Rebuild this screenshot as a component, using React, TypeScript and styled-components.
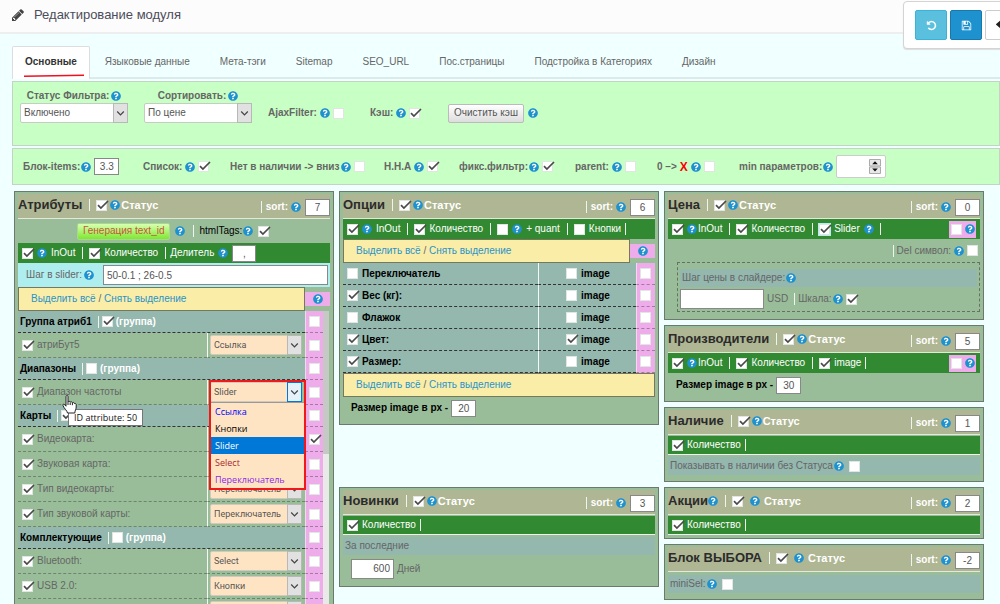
import React from 'react';
import styled, { createGlobalStyle, css } from 'styled-components';
import { FaQuestionCircle, FaReply } from 'react-icons/fa';

const Global = createGlobalStyle`
  *, *::before, *::after { box-sizing: border-box; }
  html { background: #f0ffff; }
  body { margin: 0; overflow-x: hidden; font: 10px/14px "Liberation Sans", Arial, sans-serif; color: #666; }
  input, select, button { font: inherit; color: inherit; margin: 0; }
`;

const Page = styled.div`
  position: relative;
  overflow-x: clip;
`;

const TopBar = styled.header`
  display: flex;
  align-items: center;
  gap: 10px;
  height: 34px;
  padding: 0 12px 2px;
  background: #fcfcfc;
  border-bottom: 2px solid #eee;
  color: #4c4d5a;
`;

const Title = styled.h1`
  margin: 0;
  font-size: 13px;
  font-weight: 400;
  line-height: 20px;
`;

const Toolbox = styled.div`
  position: absolute;
  top: 1px;
  right: -29px;
  z-index: 2;
  display: flex;
  gap: 3px;
  padding: 8px 11px;
  background: #fff;
  border: 1px solid #d4d4d4;
  border-radius: 4px;
  box-shadow: 0 1px 1px #ddd;
`;

const ToolButton = styled.button<{ $bg: string; $edge: string; $fg?: string }>`
  display: flex;
  align-items: center;
  justify-content: center;
  width: 32px;
  height: 30px;
  padding: 0;
  border: 1px solid ${p => p.$edge};
  border-radius: 2px;
  background: ${p => p.$bg};
  color: ${p => p.$fg ?? '#fff'};
`;

const Main = styled.main`
  padding: 12px 0 0 12px;
`;

const Tabs = styled.nav`
  display: flex;
  height: 33px;
  border-bottom: 2px solid #ddeaea;
`;

const Tab = styled.a<{ $active?: boolean }>`
  position: relative;
  height: 33px;
  padding: 9px 15px 0;
  color: #666;
  text-decoration: none;
  ${p => p.$active && css`
    padding: 8px 12px 0;
    border: 1px solid #ddd;
    border-bottom: 0;
    border-radius: 2px 2px 0 0;
    background: #fff;
    color: #333;
    font-weight: 700;
  `}
`;

const Underline = styled.svg`
  position: absolute;
  left: 11px;
  bottom: 2px;
`;

const Settings = styled.section<{ $cols: string; $tall?: boolean }>`
  display: grid;
  grid-template-columns: ${p => p.$cols};
  align-items: ${p => (p.$tall ? 'start' : 'center')};
  height: ${p => (p.$tall ? 65 : 37)}px;
  margin-top: 2px;
  padding: ${p => (p.$tall ? '7px 8px 0 7px' : '0 10px')};
  background: #c8ffc4;
  border: 1px solid #c4d4c4;
`;

const Setting = styled.div<{ $drop?: boolean }>`
  display: flex;
  align-items: center;
  gap: 3px;
  height: 20px;
  margin-top: ${p => (p.$drop ? 14 : 0)}px;
  font-weight: 700;
  white-space: nowrap;
`;

const Stacked = styled.div`
  width: 108px;
  text-align: center;
`;

const StackedLabel = styled.div`
  display: flex;
  justify-content: center;
  align-items: center;
  gap: 2px;
  height: 14px;
  font-weight: 700;
`;

const RedX = styled.b`
  color: #f00;
  font-size: 12px;
`;

const CheckBox = styled.span<{ $tint?: boolean }>`
  position: relative;
  display: inline-flex;
  flex: none;
  width: 11px;
  height: 11px;
  ${p => p.$tint && css`box-shadow: 0 0 0 1px #b8ecec; background: #b8ecec;`}
  input {
    appearance: none;
    width: 11px;
    height: 11px;
    border: 1px solid #e2e6e2;
    background: #fff;
  }
  svg {
    position: absolute;
    left: 1px;
    top: -1px;
    display: none;
    pointer-events: none;
  }
  input:checked + svg { display: block; }
`;

const HelpMark = styled.span`
  display: inline-flex;
  flex: none;
  border-radius: 50%;
  color: #1e91cf;
  background: radial-gradient(circle, #fff 50%, transparent 54%);
`;

const Pair = styled.span<{ $gap?: number }>`
  display: inline-flex;
  align-items: center;
  gap: ${p => p.$gap ?? 1}px;
`;

const Field = styled.input<{ $w: number; $h?: number; $align?: string }>`
  flex: none;
  width: ${p => p.$w}px;
  height: ${p => p.$h ?? 17}px;
  padding: 0 3px;
  border: 1px solid #888;
  background: #fff;
  color: #555;
  font-size: 10px;
  font-weight: 400;
  text-align: ${p => p.$align ?? 'center'};
`;

const Spinner = styled.span`
  position: relative;
  display: inline-flex;
  input {
    width: 50px;
    height: 23px;
    border: 1px solid #ccc;
    border-radius: 2px;
    background: #fff;
    appearance: textfield;
  }
  svg { position: absolute; right: 5px; top: 4px; }
`;

const SelectWrap = styled.span<{ $small?: boolean; $open?: boolean }>`
  position: relative;
  display: block;
  flex: none;
  width: ${p => (p.$small ? 92 : 108)}px;
  height: 20px;
  select {
    appearance: none;
    width: 100%;
    height: 100%;
    padding: 0 3px;
    border: 1px solid ${p => (p.$small ? '#cfc9c0' : '#c4ccc4')};
    border-radius: 2px;
    background: ${p => (p.$small ? '#ffe4c4' : '#fff')};
    color: #555;
    ${p => p.$small && css`font: 9px/14px Roboto, sans-serif;`}
  }
  svg {
    position: absolute;
    top: 0;
    right: 0;
    width: 15px;
    height: 20px;
    border: 1px solid ${p => (p.$open ? '#0078d7' : '#b8b8b8')};
    background: ${p => (p.$open ? '#e5f1fb' : '#e1e1e1')};
    pointer-events: none;
  }
`;

const CacheButton = styled.button`
  height: 19px;
  padding: 0 5px;
  margin-right: 1px;
  border: 1px solid #bbb;
  border-radius: 2px;
  background: linear-gradient(#fff, #ddd);
  color: #555;
  font-weight: 400;
`;

const Columns = styled.div`
  display: grid;
  grid-template-columns: repeat(3, minmax(0, 1fr));
  gap: 5px;
  align-items: start;
  margin-top: 6px;
  padding: 0 16px 0 2px;
`;

const Column = styled.div`
  display: flex;
  flex-direction: column;
  gap: 5px;
`;

const Panel = styled.section<{ $bottom?: number; $push?: number }>`
  padding: 2px 3px ${p => p.$bottom ?? 3}px;
  margin-top: ${p => p.$push ?? 0}px;
  border: 1px solid #6c7a6c;
  background: #99bd99;
`;

const Head = styled.div`
  display: flex;
  align-items: center;
  height: 25px;
  padding-bottom: 2px;
  background: #afb693;
  border-bottom: 1px solid #e4e8d8;
  color: #fff;
  font-weight: 700;
`;

const HeadTitle = styled.h2`
  margin: 0;
  color: #2b2b2b;
  font-size: 13px;
  line-height: 18px;
`;

const Status = styled.label<{ $gap: number }>`
  display: flex;
  align-items: center;
  gap: ${p => p.$gap}px;
  font-size: 11px;
`;

const SortGroup = styled.label`
  display: flex;
  align-items: center;
  gap: 4px;
  margin-left: auto;
  padding-top: 4px;
`;

const Sep = styled.i<{ $m?: string }>`
  flex: none;
  width: 1px;
  height: 12px;
  margin: ${p => p.$m ?? '0 2px 0 3px'};
  background: #eef4ee;
`;

const Bar = styled.div<{ $line?: boolean }>`
  display: flex;
  align-items: center;
  gap: 4px;
  height: 20px;
  padding: 0 4px;
  background: #318a31;
  color: #fff;
  white-space: nowrap;
  ${p => p.$line && css`height: 19px; margin-top: 1px; border-bottom: 1px solid #f0f0f0;`}
`;

const PinkTag = styled.span`
  display: flex;
  align-items: center;
  gap: 3px;
  height: 17px;
  margin: 0 0 0 auto;
  padding: 0 1px 0 2px;
  background: #efacea;
`;

const Generate = styled.div`
  display: flex;
  align-items: center;
  gap: 5px;
  height: 24px;
  padding-left: 59px;
  color: #000;
`;

const GenButton = styled.button`
  height: 17px;
  padding: 0 5px;
  border: 1px solid #a8d890;
  border-radius: 2px;
  background: linear-gradient(#d8ffb0, #7ee830);
  color: #c8553c;
`;

const StepRow = styled.div`
  display: flex;
  align-items: center;
  gap: 2px;
  height: 24px;
  padding: 0 2px 0 8px;
  background: #afeeee;
  input { flex: 1; text-align: left; min-width: 0; margin-left: 7px; }
`;

const PickRow = styled.div`
  display: flex;
  align-items: center;
`;

const Picker = styled.div`
  flex: 1;
  height: 24px;
  padding: 4px 12px;
  border: 1px solid #77775c;
  background: #f9eda8;
  a { color: #2a93c8; text-decoration: none; }
`;

const PinkHelp = styled.span`
  display: flex;
  align-items: center;
  justify-content: center;
  width: 25px;
  height: 14px;
  background: #efacea;
`;

const ListArea = styled.div`
  display: flex;
`;

const Track = styled.div`
  width: 6px;
  margin-right: 1px;
  background: #e9e9e9;
  &::before { content: ''; display: block; height: 143px; background: #c6c8c6; }
`;

const Grid = styled.table`
  flex: 1;
  width: 100%;
  border-collapse: separate;
  border-spacing: 0;
  table-layout: fixed;
  td, th { padding: 0; text-align: left; }
`;

const AttrCell = styled.td`
  height: 25px;
  border-bottom: 1px dashed #6d856d;
`;

const GroupCell = styled.th`
  height: 22px;
  background: #94b7ae;
  border-bottom: 1px dashed #333;
  color: #000;
`;

const SelectCell = styled(AttrCell)`
  position: relative;
  border-left: 1px solid #f4f8f4;
`;

const SelectPad = styled.div`
  padding-left: 2px;
`;

const PinkCell = styled.td`
  background: #efacea;
  border-left: 1px solid #f4d8f0;
  border-bottom: 1px dashed #a07aa0;
`;

const CellRow = styled.label<{ $pad?: number; $gap?: number }>`
  display: flex;
  align-items: center;
  gap: ${p => p.$gap ?? 4}px;
  padding-left: ${p => p.$pad ?? 4}px;
`;

const GroupNote = styled.span`
  color: #fff;
`;

const Menu = styled.div`
  position: absolute;
  z-index: 3;
  top: 0;
  left: 1px;
  width: 97px;
  height: 110px;
  padding-top: 20px;
  border: 2px solid #f01818;
  pointer-events: none;
`;

const MenuList = styled.ul`
  margin: 0;
  padding: 0;
  border-top: 1px solid #999;
  background: #ffe4c4;
  list-style: none;
  font: 9px/17px "Open Sans", sans-serif;
`;

const MenuItem = styled.li<{ $color: string; $on?: boolean }>`
  height: 17px;
  padding-left: 4px;
  color: ${p => p.$color};
  background: ${p => (p.$on ? '#0078d7' : 'transparent')};
`;

const HoverCell = styled(AttrCell)`
  position: relative;
`;

const Hint = styled.div`
  position: absolute;
  z-index: 3;
  left: 50px;
  top: 29px;
  padding: 0 5px;
  border: 1px solid #767676;
  background: #fff;
  color: #111;
  font: 9px/15px "Open Sans", sans-serif;
  white-space: nowrap;
`;

const Hand = styled.svg`
  position: absolute;
  z-index: 4;
  left: 44px;
  top: 15px;
`;

const OptCell = styled.td<{ $line?: boolean }>`
  height: 22px;
  background: #94b7ae;
  border-bottom: 1px dashed #333;
  color: #000;
  font-weight: 700;
  ${p => p.$line && css`border-left: 1px solid #f4f8f4;`}
`;

const SizeRow = styled.label<{ $h?: number }>`
  display: flex;
  align-items: center;
  gap: 3px;
  height: ${p => p.$h ?? 24}px;
  padding-left: 8px;
  color: #000;
  font-weight: 700;
`;

const TealRow = styled.label<{ $top?: number; $gap?: number }>`
  display: flex;
  align-items: center;
  gap: ${p => p.$gap ?? 1}px;
  height: 18px;
  margin-top: ${p => p.$top ?? 2}px;
  padding-left: 2px;
  background: #94b7ae;
`;

const InlineRow = styled.label<{ $pad?: number; $h?: number; $end?: boolean }>`
  display: flex;
  align-items: center;
  justify-content: ${p => (p.$end ? 'flex-end' : 'flex-start')};
  gap: 3px;
  height: ${p => p.$h ?? 24}px;
  padding: 0 ${p => (p.$end ? 2 : 0)}px 0 ${p => p.$pad ?? 0}px;
`;

const DashedBox = styled.div`
  margin-left: 9px;
  height: 50px;
  padding: 3px 2px 0;
  border: 1px dashed #667066;
`;

const Help = () => (
  <HelpMark><FaQuestionCircle size={10} /></HelpMark>
);

const Check = ({ on, name, tint }: { on?: boolean; name: string; tint?: boolean }) => (
  <CheckBox $tint={tint}>
    <input type="checkbox" defaultChecked={on} aria-label={name} />
    <svg width="12" height="12" viewBox="0 0 12 12" fill="none" stroke="#4a4a4a" strokeWidth="1.7">
      <path d="M1 6.200 3.900 9 11 2" />
    </svg>
  </CheckBox>
);

const Select = ({ value, label, small, open }: { value: string; label: string; small?: boolean; open?: boolean }) => (
  <SelectWrap $small={small} $open={open}>
    <select aria-label={label} defaultValue={value}><option>{value}</option></select>
    <svg viewBox="0 0 13 18" fill="none" stroke="#444" strokeWidth="1.2"><path d="M3.2 7.5 6.5 11 9.8 7.5" /></svg>
  </SelectWrap>
);

const PanelHead = ({ title, sort, help, spaced }: { title: string; sort: string; help?: boolean; spaced?: boolean }) => (
  <Head>
    <HeadTitle>{title}</HeadTitle>
    {help && <Help />}
    <Sep $m="0 6px 0 7px" />
    <Status $gap={spaced ? 7 : 3}>
      <Check on name={`${title}: статус`} />
      <Pair $gap={spaced ? 4 : 1}><Help />Статус</Pair>
    </Status>
    <SortGroup>
      <Sep $m="0" />
      <Pair $gap={3}>sort:<Help /></Pair>
      <Field $w={25} defaultValue={sort} />
    </SortGroup>
  </Head>
);

const PickLinks = ({ help }: { help?: boolean }) => (
  <PickRow>
    <Picker><a href="#all">Выделить всё</a> / <a href="#none">Снять выделение</a></Picker>
    {help && <PinkHelp><Help /></PinkHelp>}
  </PickRow>
);

type Row = { name: string; group?: boolean; on?: boolean; kind?: string; flag?: boolean; open?: boolean };

const attributes: Row[] = [
  { name: 'Группа атриб1', group: true, on: true },
  { name: 'атриБут5', kind: 'Ссылка' },
  { name: 'Диапазоны', group: true },
  { name: 'Диапазон частоты', kind: 'Slider', open: true },
  { name: 'Карты', group: true, on: true },
  { name: 'Видеокарта:', kind: 'Slider', flag: true },
  { name: 'Звуковая карта:', kind: 'Select' },
  { name: 'Тип видеокарты:', kind: 'Переключатель' },
  { name: 'Тип звуковой карты:', kind: 'Переключатель' },
  { name: 'Комплектующие', group: true },
  { name: 'Bluetooth:', kind: 'Select' },
  { name: 'USB 2.0:', kind: 'Кнопки' },
  { name: '', kind: '' },
];

const menu = [
  { text: 'Ссылка', color: '#0000ff' },
  { text: 'Кнопки', color: '#000' },
  { text: 'Slider', color: '#fff', on: true },
  { text: 'Select', color: '#a52a2a' },
  { text: 'Переключатель', color: '#8a2be2' },
];

const options = [
  { name: 'Переключатель', on: false, image: false },
  { name: 'Вес (кг):', on: true, image: false },
  { name: 'Флажок', on: false, image: false },
  { name: 'Цвет:', on: true, image: true },
  { name: 'Размер:', on: true, image: false },
];

const AttributeRow = ({ row }: { row: Row }) => {
  if (row.group) {
    return (
      <tr>
        <GroupCell colSpan={2}>
          <CellRow $pad={2} $gap={3}>
            {row.name}
            <Sep $m="0 0 0 3px" />
            <Check on={row.on} name={row.name} />
            <GroupNote>(группа)</GroupNote>
          </CellRow>
        </GroupCell>
        <PinkCell><CellRow $pad={3}><Check name={`${row.name}: метка`} /></CellRow></PinkCell>
      </tr>
    );
  }
  const NameCell = row.open ? HoverCell : AttrCell;
  return (
    <tr>
      <NameCell>
        <CellRow><Check on name={row.name} />{row.name}</CellRow>
        {row.open && (
          <>
            <Hint role="tooltip">ID attribute: 50</Hint>
            <Hand width="15" height="19" viewBox="0 0 15 19" fill="#fff" stroke="#222" strokeWidth="1" strokeLinejoin="round">
              <path d="M4 1.5c0-1.300 2-1.300 2 0V7c.3-1 2-1 2.200.2.500-.8 2-.6 2.200.6.600-.8 1.900-.4 2 .8.800-.5 1.800 0 1.800 1V12c0 2.300-1.200 3-1.400 6H5.500C5.200 15.500 2 13.500 1 10.500c-.5-1.300.8-1.800 1.600-.8L4 11.200z" />
              <path d="M6 7v3M8.200 7.500V10M10.400 8v2.200" />
            </Hand>
          </>
        )}
      </NameCell>
      <SelectCell>
        <SelectPad><Select small label={row.name} value={row.kind ?? ''} open={row.open} /></SelectPad>
        {row.open && (
          <Menu>
            <MenuList>
              {menu.map(m => <MenuItem key={m.text} $color={m.color} $on={m.on}>{m.text}</MenuItem>)}
            </MenuList>
          </Menu>
        )}
      </SelectCell>
      <PinkCell><CellRow $pad={3}><Check on={row.flag} name={`${row.name}: метка`} /></CellRow></PinkCell>
    </tr>
  );
};

const tabs = ['Языковые данные', 'Мета-тэги', 'Sitemap', 'SEO_URL', 'Пос.страницы', 'Подстройка в Категориях', 'Дизайн'];

export default function App() {
  return (
    <>
      <Global />
      <Page>
        <TopBar>
          <svg width="12" height="12" viewBox="128 128 1536 1536" fill="#444">
            <path d="M491 1536l91-91-235-235-91 91v107h128v128h107zm523-928q0-22-22-22-10 0-17 7l-542 542q-7 7-7 17 0 22 22 22 10 0 17-7l542-542q7-7 7-17zm-54-192l416 416-832 832h-416v-416zm683 96q0 53-37 90l-166 166-416-416 166-165q36-38 90-38 53 0 91 38l235 234q37 39 37 91z" />
          </svg>
          <Title>Редактирование модуля</Title>
        </TopBar>
        <Toolbox>
          <ToolButton $bg="#5bc0de" $edge="#39b3d7" aria-label="Обновить">
            <svg width="11" height="11" viewBox="0 0 1792 1792" fill="currentColor">
              <path d="M1664 896q0 156-61 298t-164 245-245 164-298 61q-172 0-327-72.500t-264-204.500q-7-10-6.500-22.500t8.500-20.500l137-138q10-9 25-9 16 2 23 12 73 95 179 147t225 52q104 0 198.500-40.500t163.500-109.500 109.500-163.500 40.500-198.500-40.500-198.500-109.500-163.500-163.500-109.500-198.500-40.500q-98 0-188 35.500t-160 101.500l137 138q31 30 14 69-17 40-59 40h-448q-26 0-45-19t-19-45v-448q0-42 40-59 39-17 69 14l130 129q107-101 244.500-156.500t284.500-55.500q156 0 298 61t245 164 164 245 61 298z" />
            </svg>
          </ToolButton>
          <ToolButton $bg="#1e91cf" $edge="#1978ab" aria-label="Сохранить">
            <svg width="11" height="11" viewBox="0 0 1792 1792" fill="currentColor">
              <path d="M512 1536h768v-384h-768v384zm896 0h128v-896q0-14-10-38.500t-20-34.500l-281-281q-10-10-34-20t-39-10v416q0 40-28 68t-68 28h-576q-40 0-68-28t-28-68v-416h-128v1280h128v-416q0-40 28-68t68-28h832q40 0 68 28t28 68v416zm-384-928v-320q0-13-9.500-22.500t-22.500-9.500h-192q-13 0-22.500 9.500t-9.500 22.500v320q0 13 9.500 22.500t22.500 9.500h192q13 0 22.500-9.500t9.500-22.500zm640 32v928q0 40-28 68t-68 28h-1344q-40 0-68-28t-28-68v-1344q0-40 28-68t68-28h928q40 0 88 20t76 48l280 280q28 28 48 76t20 88z" />
            </svg>
          </ToolButton>
          <ToolButton $bg="#fff" $edge="#ccc" $fg="#222" aria-label="Назад"><FaReply size={11} /></ToolButton>
        </Toolbox>
        <Main>
          <Tabs>
            <Tab href="#main" $active>
              Основные
              <Underline width="60" height="3" viewBox="0 0 60 3" stroke="#f01020" strokeWidth="1.500"><path d="M0 2.200 60 1.200" /></Underline>
            </Tab>
            {tabs.map(t => <Tab key={t} href="#tab">{t}</Tab>)}
          </Tabs>
          <Settings $tall $cols="124px 124px 102px 78px 1fr">
            <Stacked>
              <StackedLabel>Статус Фильтра: <Help /></StackedLabel>
              <Select label="Статус Фильтра" value="Включено" />
            </Stacked>
            <Stacked>
              <StackedLabel>Сортировать: <Help /></StackedLabel>
              <Select label="Сортировать" value="По цене" />
            </Stacked>
            <Setting $drop>AjaxFilter: <Help /> <Check name="AjaxFilter" /></Setting>
            <Setting $drop>Кэш: <Help /> <Check on name="Кэш" /></Setting>
            <Setting $drop><CacheButton>Очистить кэш</CacheButton> <Help /></Setting>
          </Settings>
          <Settings $cols="120px 87px 154px 75px 116px 82px 82px 1fr">
            <Setting><Pair>Блок-items: <Help /></Pair><Field $w={25} aria-label="Блок-items" defaultValue="3.3" /></Setting>
            <Setting>Список: <Help /> <Check on name="Список" /></Setting>
            <Setting><Pair>Нет в наличии -&gt; вниз <Help /></Pair><Check name="Нет в наличии" /></Setting>
            <Setting>Н.Н.А <Help /> <Check on name="Н.Н.А" /></Setting>
            <Setting><Pair>фикс.фильтр: <Help /></Pair><Check on name="фикс.фильтр" /></Setting>
            <Setting>parent: <Help /> <Check name="parent" /></Setting>
            <Setting>0 –&gt; <RedX>X</RedX> <Help /> <Check name="0 X" /></Setting>
            <Setting>
              <Pair>min параметров: <Help /></Pair>
              <Spinner>
                <input type="number" aria-label="min параметров" />
                <svg width="12" height="15" viewBox="0 0 12 15">
                  <path d="M.5.500h11v6.500H.5zM.5 8h11v6.500H.5z" fill="#e8e8e8" stroke="#aaa" />
                  <path d="M6 2.200 8.800 5.200H3.200zM6 12.500 8.800 9.500H3.200z" fill="#111" />
                </svg>
              </Spinner>
            </Setting>
          </Settings>
          <Columns>
            <Column>
              <Panel>
                <PanelHead title="Атрибуты" sort="7" />
                <Generate>
                  <GenButton>Генерация text_id</GenButton>
                  <Help />
                  <Sep $m="0 0 0 3px" />
                  <Pair>htmlTags:<Help /></Pair>
                  <Check on name="htmlTags" />
                </Generate>
                <Bar>
                  <Check on name="InOut" /><Help />InOut<Sep />
                  <Check on name="Количество" />Количество<Sep $m="0 0 0 3px" />
                  Делитель<Help /><Field $w={24} aria-label="Делитель" defaultValue="," />
                </Bar>
                <StepRow>Шаг в slider: <Help /><Field $w={220} $h={20} aria-label="Шаг в slider" defaultValue="50-0.1 ; 26-0.5" /></StepRow>
                <PickLinks help />
                <ListArea>
                  <Grid>
                    <colgroup><col /><col width="98" /><col width="18" /></colgroup>
                    <tbody>{attributes.map(r => <AttributeRow key={r.name} row={r} />)}</tbody>
                  </Grid>
                  <Track />
                </ListArea>
              </Panel>
            </Column>
            <Column>
              <Panel $bottom={5}>
                <PanelHead title="Опции" sort="6" />
                <Bar>
                  <Check on name="InOut" /><Help />InOut<Sep />
                  <Check on name="Количество" />Количество<Sep />
                  <Check name="quant" /><Help />+ quant<Sep />
                  <Check name="Кнопки" />Кнопки<Sep $m="0" />
                </Bar>
                <PickLinks help />
                <Grid>
                  <colgroup><col /><col width="98" /><col width="19" /></colgroup>
                  <tbody>
                    {options.map(o => (
                      <tr key={o.name}>
                        <OptCell><CellRow><Check on={o.on} name={o.name} />{o.name}</CellRow></OptCell>
                        <OptCell $line><CellRow $pad={27}><Check on={o.image} name={`${o.name} image`} />image</CellRow></OptCell>
                        <PinkCell><CellRow $pad={3}><Check name={`${o.name}: метка`} /></CellRow></PinkCell>
                      </tr>
                    ))}
                  </tbody>
                </Grid>
                <PickLinks />
                <SizeRow $h={22}>Размер image в px - <Field $w={25} defaultValue="20" /></SizeRow>
              </Panel>
              <Panel $push={57} $bottom={4}>
                <PanelHead title="Новинки" sort="3" />
                <Bar $line><Check on name="Количество" />Количество<Sep $m="0" /></Bar>
                <TealRow as="div">За последние</TealRow>
                <InlineRow $pad={8} $h={27}><Field $w={43} $h={20} $align="right" defaultValue="600" />Дней</InlineRow>
              </Panel>
            </Column>
            <Column>
              <Panel $bottom={7}>
                <PanelHead title="Цена" sort="0" />
                <Bar>
                  <Check on name="InOut" /><Pair><Help />InOut</Pair><Sep />
                  <Check on name="Количество" />Количество<Sep />
                  <Check on tint name="Slider" />Slider<Help /><Sep $m="0 0 0 2px" />
                  <PinkTag><Check name="Цена: метка" /><Help /></PinkTag>
                </Bar>
                <InlineRow $end $h={23}><Sep $m="0" />Del символ:<Help /><Check name="Del символ" /></InlineRow>
                <DashedBox>
                  <TealRow as="div" $top={3}>Шаг цены в слайдере:<Help /></TealRow>
                  <InlineRow as="div">
                    <Field $w={84} $h={20} aria-label="Шаг цены" />USD<Sep $m="0 0 0 3px" /><Pair>Шкала:<Help /></Pair><Check on name="Шкала" />
                  </InlineRow>
                </DashedBox>
              </Panel>
              <Panel $bottom={4}>
                <PanelHead title="Производители" sort="5" />
                <Bar>
                  <Check on name="InOut" /><Pair><Help />InOut</Pair><Sep />
                  <Check on name="Количество" />Количество<Sep />
                  <Check on name="image" />image<Sep $m="0" />
                  <PinkTag><Check name="Производители: метка" /><Help /></PinkTag>
                </Bar>
                <SizeRow>Размер image в px - <Field $w={25} defaultValue="30" /></SizeRow>
              </Panel>
              <Panel $bottom={6}>
                <PanelHead title="Наличие" sort="1" />
                <Bar $line><Check on name="Количество" />Количество<Sep $m="0" /></Bar>
                <TealRow $gap={5}><Pair>Показывать в наличии без Статуса<Help /></Pair><Check name="Без статуса" /></TealRow>
              </Panel>
              <Panel>
                <PanelHead title="Акции" sort="2" help spaced />
                <Bar $line><Check on name="Количество" />Количество<Sep $m="0" /></Bar>
              </Panel>
              <Panel $bottom={6}>
                <PanelHead title="Блок ВЫБОРА" sort="-2" spaced />
                <TealRow $top={3} $gap={5}><Pair>miniSel:<Help /></Pair><Check name="miniSel" /></TealRow>
              </Panel>
            </Column>
          </Columns>
        </Main>
      </Page>
    </>
  );
}
